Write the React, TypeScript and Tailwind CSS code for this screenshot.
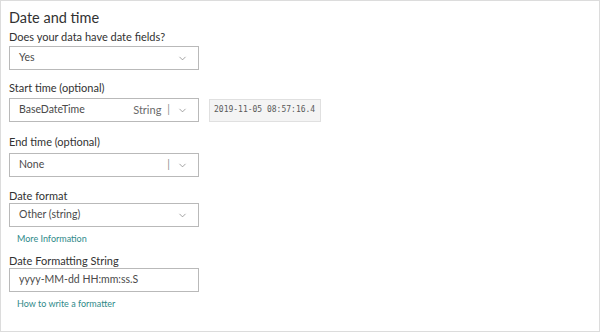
import { ChevronDown } from 'lucide-react'

const font = { fontFamily: 'Lato, "Noto Sans", sans-serif' }

function Select({ value, type, sep }: { value: string; type?: string; sep?: boolean }) {
  return (
    <div className="flex h-[24px] w-[190px] items-center border border-[#b9b9b9] bg-white pl-[9px] pr-[10px] text-[10.5px] text-[#4a4a4a]">
      <span className="flex-1">{value}</span>
      {type && <span className="mr-[6px] text-[11px] text-[#6a6a6a]">{type}</span>}
      {sep && <span className="mr-[7px] text-[#8a8a8a]">|</span>}
      <ChevronDown size={11} strokeWidth={1.5} className="text-[#7a7a7a]" />
    </div>
  )
}

export default function App() {
  return (
    <div className="h-[332px] w-[600px] border border-[#dcdcdc] bg-white pl-[8px] pt-[8px] text-[#323232]" style={font}>
      <h2 className="mb-[3px] text-[14.5px] leading-[18px]">Date and time</h2>

      <label className="block text-[11px] leading-[14px]">Does your data have date fields?</label>
      <div className="mt-[2px]">
        <Select value="Yes" />
      </div>

      <label className="mt-[11px] block text-[11px] leading-[14px]">Start time (optional)</label>
      <div className="mt-[3px] flex items-center gap-[10px]">
        <Select value="BaseDateTime" type="String" sep />
        <div className="flex h-[23px] w-[112px] items-center whitespace-nowrap border border-[#e0e0e0] bg-[#f4f4f4] pl-[4px] text-[8px] text-[#5a5a5a]" style={{ fontFamily: '"DejaVu Sans Mono", monospace' }}>
          2019-11-05 08:57:16.4
        </div>
      </div>

      <label className="mt-[13px] block text-[11px] leading-[14px]">End time (optional)</label>
      <div className="mt-[4px]">
        <Select value="None" sep />
      </div>

      <label className="mt-[12px] block text-[11px] leading-[14px]">Date format</label>
      <div>
        <Select value="Other (string)" />
      </div>
      <a className="ml-[8px] mt-[5px] block text-[9px] leading-[14px] text-[#2f8a8a]">More Information</a>

      <label className="mt-[8px] block text-[11px] leading-[14px]">Date Formatting String</label>
      <div className="flex h-[24px] w-[190px] items-center border border-[#b9b9b9] pl-[9px] text-[10.5px] text-[#4a4a4a]">
        yyyy-MM-dd HH:mm:ss.S
      </div>
      <a className="ml-[8px] mt-[5px] block text-[9px] leading-[14px] text-[#2f8a8a]">How to write a formatter</a>
    </div>
  )
}
